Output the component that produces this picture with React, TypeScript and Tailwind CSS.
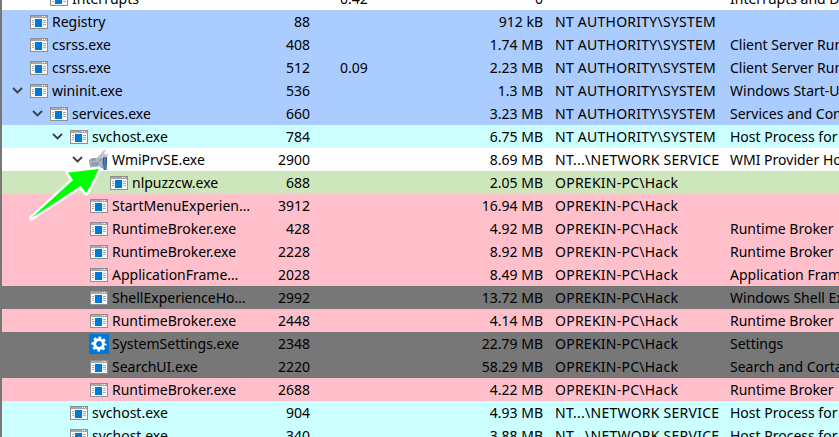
const FONT = "font-['Noto_Sans',sans-serif]"

type Row = {
  name: string
  depth: number
  open?: boolean
  icon?: "app" | "wmi" | "gear"
  pid: string
  cpu?: string
  mem: string
  user: string
  desc?: string
  bg: string
}

const BLUE = "bg-[#aaccff]"
const CYAN = "bg-[#ccffff]"
const PINK = "bg-[#ffc0cb]"
const GRAY = "bg-[#777777]"
const GREEN = "bg-[#cee6bb]"
const WHITE = "bg-white"

const SYS = "NT AUTHORITY\\SYSTEM"
const NET = "NT...\\NETWORK SERVICE"
const HACK = "OPREKIN-PC\\Hack"

const rows: Row[] = [
  { name: "Interrupts", depth: 1, pid: "", cpu: "0.42", mem: "0", user: "", desc: "Interrupts and DPCs", bg: WHITE },
  { name: "Registry", depth: 0, pid: "88", mem: "912 kB", user: SYS, bg: BLUE },
  { name: "csrss.exe", depth: 0, pid: "408", mem: "1.74 MB", user: SYS, desc: "Client Server Runtime Process", bg: BLUE },
  { name: "csrss.exe", depth: 0, pid: "512", cpu: "0.09", mem: "2.23 MB", user: SYS, desc: "Client Server Runtime Process", bg: BLUE },
  { name: "wininit.exe", depth: 0, open: true, pid: "536", mem: "1.3 MB", user: SYS, desc: "Windows Start-Up Application", bg: BLUE },
  { name: "services.exe", depth: 1, open: true, pid: "660", mem: "3.23 MB", user: SYS, desc: "Services and Controller app", bg: BLUE },
  { name: "svchost.exe", depth: 2, open: true, pid: "784", mem: "6.75 MB", user: SYS, desc: "Host Process for Windows Services", bg: CYAN },
  { name: "WmiPrvSE.exe", depth: 3, open: true, icon: "wmi", pid: "2900", mem: "8.69 MB", user: NET, desc: "WMI Provider Host", bg: WHITE },
  { name: "nlpuzzcw.exe", depth: 4, pid: "688", mem: "2.05 MB", user: HACK, bg: GREEN },
  { name: "StartMenuExperien…", depth: 3, pid: "3912", mem: "16.94 MB", user: HACK, bg: PINK },
  { name: "RuntimeBroker.exe", depth: 3, pid: "428", mem: "4.92 MB", user: HACK, desc: "Runtime Broker", bg: PINK },
  { name: "RuntimeBroker.exe", depth: 3, pid: "2228", mem: "8.92 MB", user: HACK, desc: "Runtime Broker", bg: PINK },
  { name: "ApplicationFrame…", depth: 3, pid: "2028", mem: "8.49 MB", user: HACK, desc: "Application Frame Host", bg: PINK },
  { name: "ShellExperienceHo…", depth: 3, pid: "2992", mem: "13.72 MB", user: HACK, desc: "Windows Shell Experience Host", bg: GRAY },
  { name: "RuntimeBroker.exe", depth: 3, pid: "2448", mem: "4.14 MB", user: HACK, desc: "Runtime Broker", bg: PINK },
  { name: "SystemSettings.exe", depth: 3, icon: "gear", pid: "2348", mem: "22.79 MB", user: HACK, desc: "Settings", bg: GRAY },
  { name: "SearchUI.exe", depth: 3, pid: "2220", mem: "58.29 MB", user: HACK, desc: "Search and Cortana application", bg: GRAY },
  { name: "RuntimeBroker.exe", depth: 3, pid: "2688", mem: "4.22 MB", user: HACK, desc: "Runtime Broker", bg: PINK },
  { name: "svchost.exe", depth: 2, pid: "904", mem: "4.93 MB", user: NET, desc: "Host Process for Windows Services", bg: CYAN },
  { name: "svchost.exe", depth: 2, pid: "340", mem: "3.88 MB", user: NET, desc: "Host Process for Windows Services", bg: CYAN },
]

function AppIcon() {
  return (
    <svg width="18" height="14" viewBox="0 0 18 14" className="shrink-0">
      <rect x="0.5" y="0.5" width="17" height="13" fill="#f6f8fa" stroke="#8f8f8f" />
      <rect x="1" y="1" width="16" height="2" fill="#a8a8a8" />
      <rect x="12" y="1" width="1" height="1" fill="#fff" />
      <rect x="14" y="1" width="1" height="1" fill="#fff" />
      <rect x="5" y="4" width="7" height="8" fill="#0078d7" />
      <path d="M2 5.5h2M2 7.5h2M2 9.5h2" stroke="#a9adb1" />
      <path d="M13 5.5h3M13 7.5h3M13 9.5h3" stroke="#a9adb1" />
    </svg>
  )
}

function WmiIcon() {
  return (
    <svg width="20" height="20" viewBox="0 0 20 20" className="shrink-0">
      <path d="M0 10l3-2h11v10H1z" fill="#8fa0ae" />
      <rect x="1" y="11" width="12" height="6" fill="#a9bac8" />
      <path d="M2 13h8M2 15h7" stroke="#6f8396" />
      <path d="M7 11l7-7" stroke="#b5b8bc" strokeWidth="3" />
      <path d="M12 3l3-3h2l-2 3 2 2 2-2v3l-3 2h-2z" fill="#c3c6ca" />
      <path d="M14 7h4v6l-0.5 7h-3l-0.5-7z" fill="#2f5f9e" />
      <path d="M15.5 7h1v12h-1z" fill="#6d93c4" />
    </svg>
  )
}

function GearIcon() {
  return (
    <div className="shrink-0 w-5 h-5 bg-[#0078d7] flex items-center justify-center">
      <svg width="16" height="16" viewBox="0 0 16 16">
        <circle cx="8" cy="8" r="4.4" fill="none" stroke="#fff" strokeWidth="3" />
        <circle cx="8" cy="8" r="6.4" fill="none" stroke="#fff" strokeWidth="2.4" strokeDasharray="2.6 2.43" strokeDashoffset="1.3" />
      </svg>
    </div>
  )
}

function Chevron() {
  return (
    <svg width="11" height="7" viewBox="0 0 11 7" className="shrink-0">
      <path d="M1 1l4.5 4.5L10 1" fill="none" stroke="#3f3f3f" strokeWidth="1.8" />
    </svg>
  )
}

function indentClass(depth: number) {
  if (depth === 0) return "pl-[10px]"
  if (depth === 1) return "pl-[30px]"
  if (depth === 2) return "pl-[50px]"
  if (depth === 3) return "pl-[70px]"
  return "pl-[90px]"
}

function TreeRow({ row }: { row: Row }) {
  const icon = row.icon === "wmi" ? <WmiIcon /> : row.icon === "gear" ? <GearIcon /> : <AppIcon />
  return (
    <div className={`${row.bg} h-[23px] grid grid-cols-[268px_40px_30px_203px_187px_1fr] items-center whitespace-nowrap`}>
      <div className={`${indentClass(row.depth)} flex items-center`}>
        <div className="w-[17px] flex items-center">{row.open && <Chevron />}</div>
        <div className="w-[20px] flex items-center justify-center">{icon}</div>
        <span className="ml-[3px]">{row.name}</span>
      </div>
      <div className="text-right">{row.pid}</div>
      <div className="pl-[30px]">{row.cpu}</div>
      <div className="text-right">{row.mem}</div>
      <div className="pl-[12px] tracking-[0.25px]">{row.user}</div>
      <div>{row.desc}</div>
    </div>
  )
}

export default function App() {
  return (
    <div className={`relative w-[839px] h-[437px] overflow-hidden bg-white border-l-2 border-[#777777] text-black text-[14px] ${FONT}`}>
      <div className="-mt-[13px] overflow-hidden">
        {rows.map((row, i) => (
          <TreeRow key={i} row={row} />
        ))}
      </div>
      {/* green callout arrow pointing at the wmi process */}
      <svg width="110" height="80" viewBox="0 0 110 80" className="absolute left-[-2px] top-[160px]">
        <path
          d="M31.5 58 L73 20 L68 12.5 L99 9 L86.5 33 L80.5 26 Z"
          fill="#00ff00"
          stroke="#fff"
          strokeWidth="5"
          strokeLinejoin="round"
          paintOrder="stroke"
        />
      </svg>
    </div>
  )
}
